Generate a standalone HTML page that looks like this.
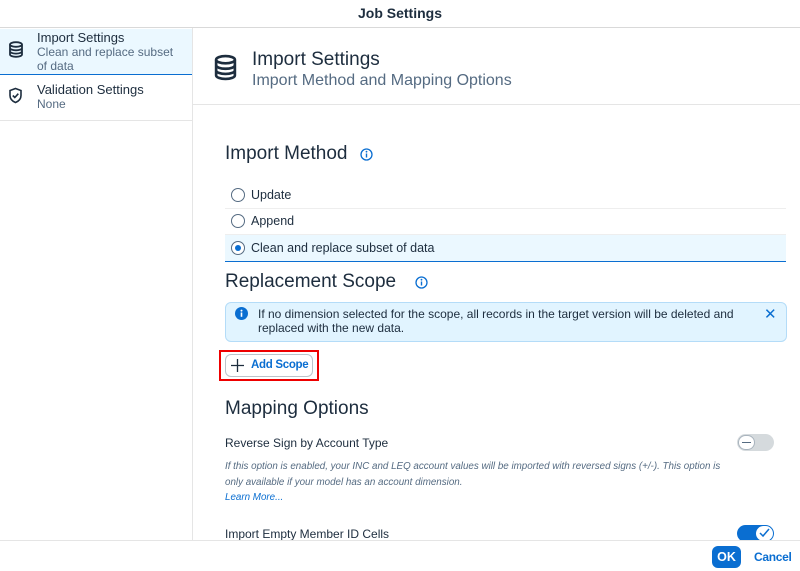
<!DOCTYPE html>
<html><head><style>
*{box-sizing:border-box;margin:0;padding:0}
body{width:800px;height:571px;overflow:hidden;background:#fff;font-family:"Liberation Sans",sans-serif;color:#1d2d3e;position:relative}
.a{position:absolute}
</style></head><body>
<div class="a" style="left:0;top:0;width:800px;height:28px;border-bottom:1px solid #d9d9d9;text-align:center;font-size:14px;font-weight:bold;line-height:27px">Job Settings</div>
<div class="a" style="left:192px;top:28px;width:1px;height:512px;background:#e5e5e5"></div>
<div class="a" style="left:0;top:29px;width:192px;height:46px;background:#ebf8ff;border-bottom:1px solid #0a6ed1"></div>
<svg class="a" style="left:8px;top:41px" width="16" height="17" viewBox="0 0 16 17"><g fill="none" stroke="#1d2d3e" stroke-width="1.8"><ellipse cx="8" cy="3.5" rx="6" ry="2.3"/><path d="M2 3.5v10c0 1.3 2.7 2.3 6 2.3s6-1 6-2.3v-10M2 7c0 1.3 2.7 2.3 6 2.3s6-1 6-2.3M2 10.3c0 1.3 2.7 2.3 6 2.3s6-1 6-2.3"/></g></svg>
<div class="a" style="left:37px;top:31px;font-size:13px;line-height:14px">Import Settings</div>
<div class="a" style="left:37px;top:45px;font-size:12px;line-height:14px;color:#556b82;width:140px">Clean and replace subset of data</div>
<svg class="a" style="left:8px;top:87px" width="15" height="17" viewBox="0 0 15 17"><path d="M7.5 1.5L13 3.5v5c0 3.5-2.5 5.8-5.5 7C4.5 14.3 2 12 2 8.5v-5z" fill="none" stroke="#1d2d3e" stroke-width="1.6"/><path d="M4.8 8.5l2 2 3.5-3.8" fill="none" stroke="#1d2d3e" stroke-width="1.6"/></svg>
<div class="a" style="left:37px;top:83px;font-size:13px;line-height:14px">Validation Settings</div>
<div class="a" style="left:37px;top:97px;font-size:12px;line-height:14px;color:#556b82">None</div>
<div class="a" style="left:0;top:120px;width:192px;height:1px;background:#e5e5e5"></div>

<div class="a" style="left:193px;top:104px;width:607px;height:1px;background:#e5e5e5"></div>
<svg class="a" style="left:213px;top:54px" width="25" height="27" viewBox="0 0 16 17"><g fill="none" stroke="#1d2d3e" stroke-width="1.7"><ellipse cx="8" cy="3.5" rx="6" ry="2.3"/><path d="M2 3.5v10c0 1.3 2.7 2.3 6 2.3s6-1 6-2.3v-10M2 7c0 1.3 2.7 2.3 6 2.3s6-1 6-2.3M2 10.3c0 1.3 2.7 2.3 6 2.3s6-1 6-2.3"/></g></svg>
<div class="a" style="left:252px;top:49px;font-size:19px;line-height:22px">Import Settings</div>
<div class="a" style="left:252px;top:71px;font-size:16px;line-height:19px;color:#556b82">Import Method and Mapping Options</div>

<div class="a" style="left:225px;top:143px;font-size:19px;line-height:22px">Import Method</div>
<svg class="a" style="left:360px;top:148px" width="13" height="13" viewBox="0 0 13 13"><circle cx="6.5" cy="6.5" r="5.5" fill="none" stroke="#0a6ed1" stroke-width="1.3"/><path d="M6.5 5.5v4" stroke="#0a6ed1" stroke-width="1.4"/><circle cx="6.5" cy="3.7" r=".9" fill="#0a6ed1"/></svg>

<div class="a" style="left:225px;top:208px;width:561px;height:1px;background:#eee"></div>
<div class="a" style="left:225px;top:234px;width:561px;height:1px;background:#eee"></div>
<div class="a" style="left:225px;top:235px;width:561px;height:27px;background:#ebf8ff;border-bottom:1px solid #0a6ed1"></div>
<div class="a" style="left:231px;top:188px;width:14px;height:14px;border:1px solid #556b82;border-radius:50%"></div>
<div class="a" style="left:251px;top:188px;font-size:12.5px">Update</div>
<div class="a" style="left:231px;top:214px;width:14px;height:14px;border:1px solid #556b82;border-radius:50%"></div>
<div class="a" style="left:251px;top:214px;font-size:12.5px">Append</div>
<div class="a" style="left:231px;top:241px;width:14px;height:14px;border:1px solid #556b82;border-radius:50%;background:#fff"><div style="margin:3px;width:6px;height:6px;border-radius:50%;background:#0a6ed1"></div></div>
<div class="a" style="left:251px;top:241px;font-size:12.5px">Clean and replace subset of data</div>

<div class="a" style="left:225px;top:271px;font-size:19px;line-height:22px">Replacement Scope</div>
<svg class="a" style="left:415px;top:276px" width="13" height="13" viewBox="0 0 13 13"><circle cx="6.5" cy="6.5" r="5.5" fill="none" stroke="#0a6ed1" stroke-width="1.3"/><path d="M6.5 5.5v4" stroke="#0a6ed1" stroke-width="1.4"/><circle cx="6.5" cy="3.7" r=".9" fill="#0a6ed1"/></svg>

<div class="a" style="left:225px;top:302px;width:562px;height:40px;background:#e1f4ff;border:1px solid #b4dcf8;border-radius:6px"></div>
<svg class="a" style="left:235px;top:307px" width="13" height="13"><circle cx="6.5" cy="6.5" r="6.5" fill="#0a6ed1"/><path d="M6.5 5.5v4.3" stroke="#fff" stroke-width="1.6"/><circle cx="6.5" cy="3.6" r="1" fill="#fff"/></svg>
<div class="a" style="left:258px;top:307px;font-size:12px;line-height:14px;width:480px">If no dimension selected for the scope, all records in the target version will be deleted and replaced with the new data.</div>
<div class="a" style="left:764px;top:305px;font-size:15px;color:#0a6ed1">✕</div>

<div class="a" style="left:219px;top:350px;width:100px;height:31px;border:2px solid #e00"></div>
<div class="a" style="left:225px;top:354px;width:88px;height:23px;border:1px solid #bcc3ca;border-radius:6px"></div>
<svg class="a" style="left:231px;top:359px" width="13" height="13"><path d="M6.5 0v13M0 6.5h13" stroke="#1d2d3e" stroke-width="1.3"/></svg>
<div class="a" style="left:251px;top:359px;font-size:11.5px;letter-spacing:-0.3px;font-weight:bold;color:#0a6ed1">Add Scope</div>

<div class="a" style="left:225px;top:398px;font-size:19px;line-height:22px">Mapping Options</div>
<div class="a" style="left:225px;top:436px;font-size:12px">Reverse Sign by Account Type</div>
<div class="a" style="left:737px;top:434px;width:37px;height:17px;border-radius:9px;background:#d5dadd"></div>
<div class="a" style="left:738px;top:435px;width:17px;height:15px;border-radius:8px;background:#fff;border:1px solid #a9b4be"><div style="margin:6px 3px;height:1px;background:#556b82"></div></div>
<div class="a" style="left:225px;top:459px;width:560px;font-size:9.8px;font-style:italic;line-height:16px;color:#556b82;white-space:nowrap">If this option is enabled, your INC and LEQ account values will be imported with reversed signs (+/-). This option is<br>only available if your model has an account dimension.</div>
<div class="a" style="left:225px;top:492px;font-size:9.8px;font-style:italic;color:#0a6ed1">Learn More...</div>
<div class="a" style="left:225px;top:527px;font-size:12px">Import Empty Member ID Cells</div>
<div class="a" style="left:737px;top:525px;width:37px;height:17px;border-radius:9px;background:#0a6ed1"></div>
<div class="a" style="left:756px;top:526px;width:17px;height:15px;border-radius:8px;background:#fff"></div>
<svg class="a" style="left:758px;top:527px" width="13" height="12"><path d="M2 6l3 3 6-7" fill="none" stroke="#0a6ed1" stroke-width="1.5"/></svg>

<div class="a" style="left:0;top:540px;width:800px;height:31px;background:#fff;border-top:1px solid #e5e5e5"></div>
<div class="a" style="left:712px;top:546px;width:29px;height:22px;border-radius:6px;background:#0a6ed1;color:#fff;font-weight:bold;font-size:12.5px;text-align:center;line-height:22px">OK</div>
<div class="a" style="left:754px;top:550px;font-size:12px;letter-spacing:-0.3px;font-weight:bold;color:#0a6ed1">Cancel</div>
</body></html>
